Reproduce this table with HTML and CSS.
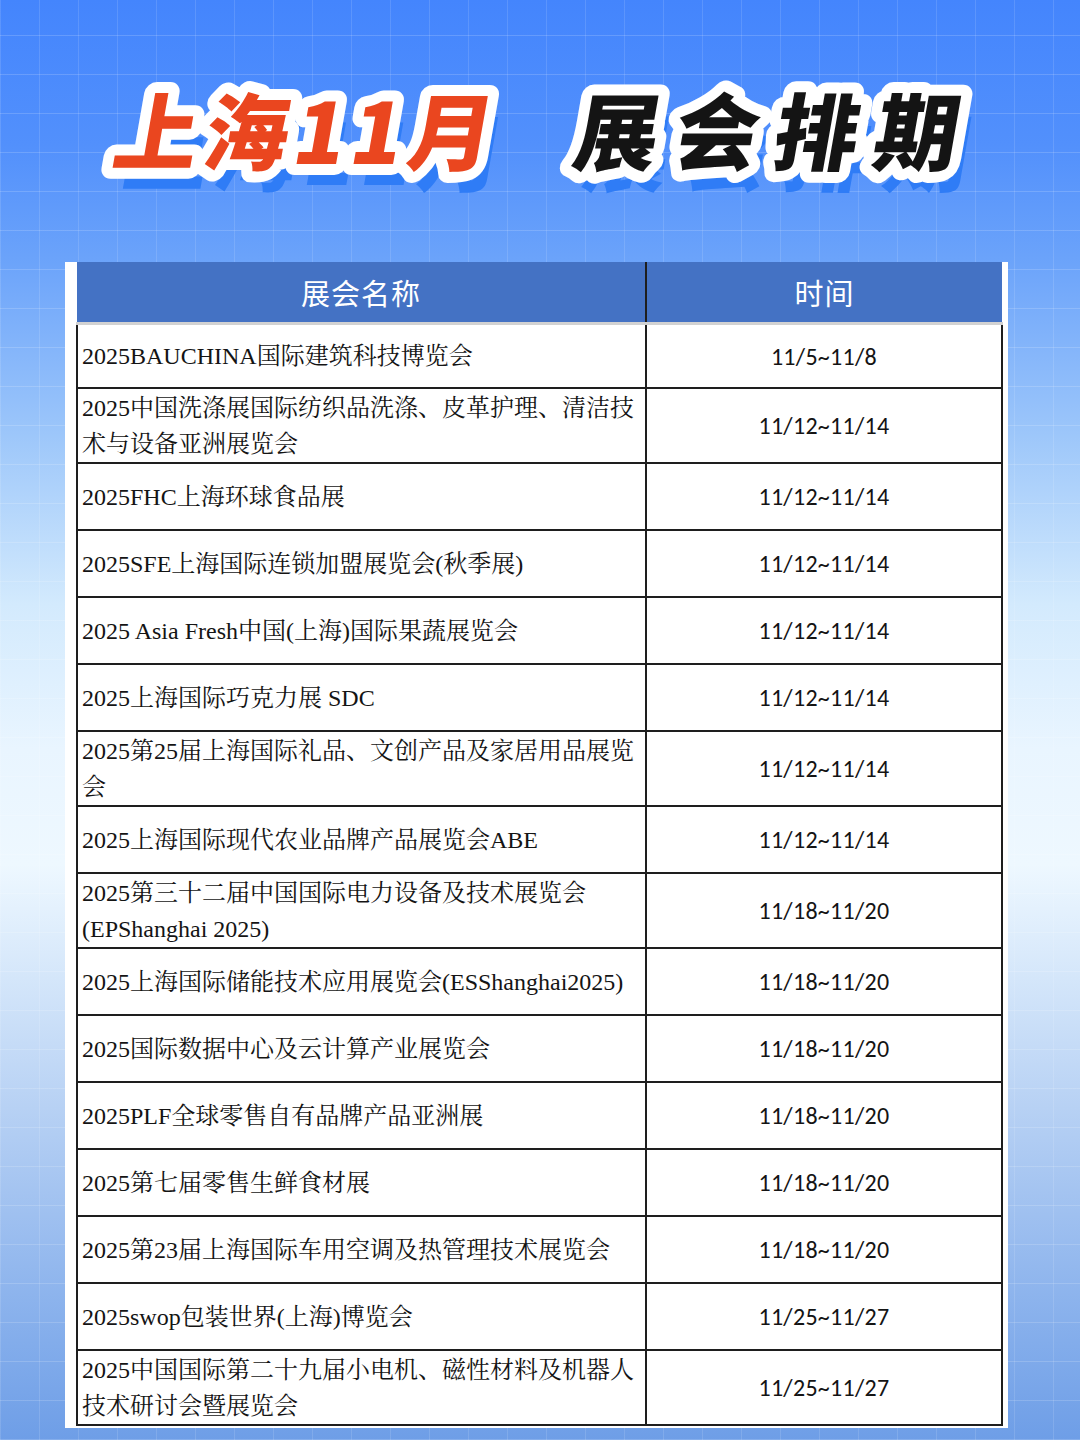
FILE: index.html
```html
<!DOCTYPE html>
<html lang="zh-CN">
<head>
<meta charset="utf-8">
<title>上海11月 展会排期</title>
<link rel="stylesheet" href="styles.css">
</head>
<body>
<div class="page">
  <header class="title">
    <svg class="title-svg" width="1080" height="262" viewBox="0 0 1080 262" role="img" aria-label="上海11月 展会排期">
      <g transform="translate(0,164) skewX(-10)">
        <text class="t-shadow" x="124" y="21" aria-hidden="true">上海11月</text>
        <text class="t-red" x="110" y="0">上海11月</text>
        <text class="t-shadow t-wide" x="584" y="21" aria-hidden="true">展会排期</text>
        <text class="t-black t-wide" x="570" y="0">展会排期</text>
      </g>
    </svg>
  </header>

  <div class="sheet">
    <table class="expo">
      <colgroup>
        <col class="c-name">
        <col class="c-date">
      </colgroup>
      <thead>
        <tr>
          <th>展会名称</th>
          <th>时间</th>
        </tr>
      </thead>
      <tbody>
        <tr class="r0"><td class="name">2025BAUCHINA国际建筑科技博览会</td><td class="date">11/5~11/8</td></tr>
        <tr class="r2"><td class="name">2025中国洗涤展国际纺织品洗涤、皮革护理、清洁技术与设备亚洲展览会</td><td class="date">11/12~11/14</td></tr>
        <tr class="r1"><td class="name">2025FHC上海环球食品展</td><td class="date">11/12~11/14</td></tr>
        <tr class="r1"><td class="name">2025SFE上海国际连锁加盟展览会(秋季展)</td><td class="date">11/12~11/14</td></tr>
        <tr class="r1"><td class="name">2025 Asia Fresh中国(上海)国际果蔬展览会</td><td class="date">11/12~11/14</td></tr>
        <tr class="r1"><td class="name">2025上海国际巧克力展 SDC</td><td class="date">11/12~11/14</td></tr>
        <tr class="r2"><td class="name">2025第25届上海国际礼品、文创产品及家居用品展览会</td><td class="date">11/12~11/14</td></tr>
        <tr class="r1"><td class="name">2025上海国际现代农业品牌产品展览会ABE</td><td class="date">11/12~11/14</td></tr>
        <tr class="r2"><td class="name">2025第三十二届中国国际电力设备及技术展览会<br>(EPShanghai 2025)</td><td class="date">11/18~11/20</td></tr>
        <tr class="r1"><td class="name">2025上海国际储能技术应用展览会(ESShanghai2025)</td><td class="date">11/18~11/20</td></tr>
        <tr class="r1"><td class="name">2025国际数据中心及云计算产业展览会</td><td class="date">11/18~11/20</td></tr>
        <tr class="r1"><td class="name">2025PLF全球零售自有品牌产品亚洲展</td><td class="date">11/18~11/20</td></tr>
        <tr class="r1"><td class="name">2025第七届零售生鲜食材展</td><td class="date">11/18~11/20</td></tr>
        <tr class="r1"><td class="name">2025第23届上海国际车用空调及热管理技术展览会</td><td class="date">11/18~11/20</td></tr>
        <tr class="r1"><td class="name">2025swop包装世界(上海)博览会</td><td class="date">11/25~11/27</td></tr>
        <tr class="r2"><td class="name">2025中国国际第二十九届小电机、磁性材料及机器人技术研讨会暨展览会</td><td class="date">11/25~11/27</td></tr>
      </tbody>
    </table>
  </div>
</div>
</body>
</html>
```

FILE: styles.css
```css
html, body {
  margin: 0;
  padding: 0;
}

body {
  width: 1080px;
  height: 1440px;
  overflow: hidden;
  font-family: "Noto Sans CJK SC", sans-serif;
}

.page {
  width: 1080px;
  height: 1440px;
  background-color: #4485fd;
  background-image:
    repeating-linear-gradient(0deg, rgba(255,255,255,0.16) 0 1px, transparent 1px 39px),
    repeating-linear-gradient(90deg, rgba(255,255,255,0.12) 0 1px, transparent 1px 39px),
    linear-gradient(180deg,
      #4485fd 0%,
      #5290fc 10%,
      #6ba3fa 18%,
      #9cc6fa 30%,
      #d3eafd 42%,
      #e9f5ff 52%,
      #eef8ff 60%,
      #d4e6fa 68%,
      #b7d1f4 77%,
      #93b8ee 88%,
      #6e9ee7 100%);
}

.title {
  height: 262px;
}

.title-svg {
  display: block;
}

.title-svg text {
  font-family: "Noto Sans CJK SC", sans-serif;
  font-weight: 900;
  font-size: 84px;
  letter-spacing: 6px;
}

.title-svg .t-wide {
  letter-spacing: 16px;
}

.t-shadow {
  fill: #2f7cf6;
}

.t-red,
.t-black {
  stroke: #ffffff;
  stroke-width: 22px;
  stroke-linejoin: round;
  stroke-linecap: round;
  paint-order: stroke fill;
}

.t-red {
  fill: #ea461f;
}

.t-black {
  fill: #141414;
}

.sheet {
  margin-left: 65px;
  width: 925px;
  padding: 0 7px 2px 11px;
  background: #ffffff;
}

.expo {
  width: 925px;
  border-collapse: collapse;
  table-layout: fixed;
}

.c-name {
  width: 569px;
}

.c-date {
  width: 356px;
}

.expo th {
  height: 60px;
  padding: 0;
  background: #4472c4;
  color: #ffffff;
  font-family: "Noto Sans CJK SC", sans-serif;
  font-weight: 400;
  font-size: 29px;
  letter-spacing: 1px;
  text-align: center;
  vertical-align: middle;
  border-bottom: 3px solid #d2d2d2;
}

.expo th + th {
  border-left: 2px solid #1e1e1e;
}

.expo td {
  padding: 0 4px;
  border: 2px solid #1e1e1e;
  border-top: none;
  vertical-align: middle;
  color: #141414;
}

.r0 td {
  height: 62px;
}

.r1 td {
  height: 65px;
}

.r2 td {
  height: 73px;
}

.name {
  font-family: "Liberation Serif", "Noto Serif CJK SC", "Noto Sans CJK SC", serif;
  font-size: 24px;
  line-height: 36px;
  text-align: left;
  color: #111111;
}

.date {
  font-family: "Carlito", "Lato", "Liberation Sans", sans-serif;
  font-weight: 300;
  font-size: 24px;
  text-align: center;
  letter-spacing: 0.3px;
  color: #1a1a1a;
}
```
